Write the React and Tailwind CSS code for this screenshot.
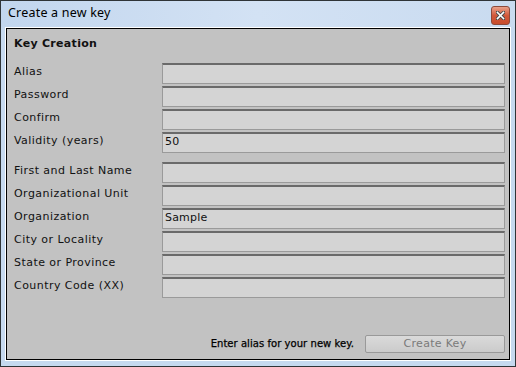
import React from 'react';

const font = { fontFamily: '"DejaVu Sans", Verdana, sans-serif' };

function Field({ label, value = '' }) {
  return (
    <div className="flex items-center h-[21px]">
      <div className="w-[148px] text-[11px] text-[#111] tracking-[0.45px] leading-none -mt-[4px]">{label}</div>
      <div className="flex-1 h-[21px] bg-[#d4d4d4] border border-[#9a9a9a] border-t-[#6a6a6a] border-t-2 px-[2px] text-[11px] text-[#111] tracking-[0.2px] leading-none flex items-start pt-[2px]">
        {value}
      </div>
    </div>
  );
}

export default function App() {
  return (
    <div className="w-[516px] h-[367px] border border-[#2f3437] bg-[#c6d9ef] flex flex-col" style={font}>
      {/* Title bar */}
      <div className="h-[26px] flex items-center justify-between pl-[7px] pr-[5px] bg-gradient-to-r from-[#c2d6ee] via-[#d3e2f4] to-[#c9dbf0]">
        <span className="text-[12.5px] text-black -mt-[1px] tracking-[0.2px]" style={{ fontFamily: '"Noto Sans", "Open Sans", sans-serif' }}>Create a new key</span>
        <div className="w-[19px] h-[19px] mt-[3px] rounded-[3px] border border-[#8c4a3c] bg-gradient-to-b from-[#e8a08a] via-[#d2583a] to-[#c84c2c] flex items-center justify-center">
          <svg width="9" height="9" viewBox="0 0 9 9">
            <path d="M1 1 L8 8 M8 1 L1 8" stroke="#4a4a4a" strokeWidth="3.4" strokeLinecap="square" />
            <path d="M1.5 1.5 L7.5 7.5 M7.5 1.5 L1.5 7.5" stroke="#fff" strokeWidth="1.6" strokeLinecap="square" />
          </svg>
        </div>
      </div>
      {/* Client area */}
      <div className="flex-1 mx-[4px] mb-[5px] border border-white">
        <div className="h-full border border-black bg-[#c2c2c2] flex flex-col pl-[7px] pr-[4px]">
          <div className="text-[11px] font-bold text-[#111] tracking-[0.3px] mt-[9px] leading-none">Key Creation</div>
          <div className="flex flex-col gap-[2px] mt-[14px]">
            <Field label="Alias" />
            <Field label="Password" />
            <Field label="Confirm" />
            <Field label="Validity (years)" value="50" />
          </div>
          <div className="flex flex-col gap-[2px] mt-[9px]">
            <Field label="First and Last Name" />
            <Field label="Organizational Unit" />
            <Field label="Organization" value="Sample" />
            <Field label="City or Locality" />
            <Field label="State or Province" />
            <Field label="Country Code (XX)" />
          </div>
          <div className="flex-1" />
          <div className="flex items-center justify-end mb-[6px]">
            <span className="text-[10px] text-black tracking-[0.05px] mr-[11px] -mt-[1px]" style={{ WebkitTextStroke: '0.25px #000' }}>Enter alias for your new key.</span>
            <div className="w-[140px] h-[18px] rounded-[2px] border border-[#999] bg-gradient-to-b from-[#dadada] to-[#cbcbcb] flex items-center justify-center text-[11px] text-[#7a7a7a] tracking-[0.3px]">
              Create Key
            </div>
          </div>
        </div>
      </div>
    </div>
  );
}
